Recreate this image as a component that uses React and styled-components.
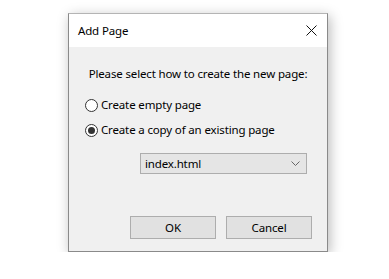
import React, { useState } from 'react';
import styled, { createGlobalStyle } from 'styled-components';

const GlobalStyle = createGlobalStyle`
    html, body {
        margin: 0;
        background: #ffffff;
        font-family: "Noto Sans", "Liberation Sans", sans-serif;
        font-size: 11.5px;
        letter-spacing: -0.15px;
        color: #000;
    }
`;

const Page = styled.div`
    padding: 13px 0 0 68px;
`;

const Dialog = styled.div`
    width: 260px;
    box-sizing: border-box;
    border: 1px solid #8a8a8a;
    border-top-color: #b4b4b4;
    background: #f0f0f0;
    box-shadow: 2px 3px 12px rgba(0, 0, 0, 0.28);
`;

const TitleBar = styled.div`
    display: flex;
    align-items: center;
    justify-content: space-between;
    height: 33px;
    padding-left: 9px;
    background: #ffffff;
`;

const Title = styled.span`
    line-height: 16px;
`;

const CloseBtn = styled.button`
    display: flex;
    align-items: center;
    justify-content: center;
    width: 32px;
    height: 33px;
    padding: 0;
    border: none;
    background: inherit;
`;

const Body = styled.div`
    display: flex;
    flex-direction: column;
    padding: 19px 15px 12px 15px;
`;

const Prompt = styled.p`
    margin: 0 0 15px 0;
    text-align: center;
    white-space: nowrap;
    line-height: 16px;
`;

const Options = styled.div`
    display: flex;
    flex-direction: column;
    gap: 9px;
    padding-left: 1px;
`;

const Option = styled.label`
    display: flex;
    align-items: center;
    height: 16px;
    line-height: 16px;
    white-space: nowrap;
`;

const Dot = styled.span`
    display: flex;
    align-items: center;
    justify-content: center;
    box-sizing: border-box;
    width: 13px;
    height: 13px;
    margin-right: 3px;
    border: 1px solid #333;
    border-radius: 50%;
    background: #fff;
    &::after {
        content: '';
        width: 7px;
        height: 7px;
        border-radius: 50%;
        background: ${({ on }) => (on ? '#333' : 'transparent')};
    }
`;

const Combo = styled.div`
    display: flex;
    align-items: center;
    justify-content: space-between;
    box-sizing: border-box;
    width: 167px;
    height: 21px;
    margin: 15px 0 0 56px;
    padding: 0 6px 0 4px;
    border: 1px solid #adadad;
    background: #e5e5e5;
    line-height: 16px;
`;

const Buttons = styled.div`
    display: flex;
    justify-content: flex-end;
    gap: 10px;
    margin-top: 42px;
`;

const Button = styled.button`
    width: 86px;
    height: 23px;
    padding: 0;
    border: 1px solid #adadad;
    background: #e1e1e1;
    font-family: inherit;
    font-size: inherit;
    letter-spacing: inherit;
    color: #000;
`;

const App = () => {
    const [mode, setMode] = useState('copy');

    return (
        <Page>
            <GlobalStyle />
            <Dialog>
                <TitleBar>
                    <Title>Add Page</Title>
                    <CloseBtn type="button">
                        <svg width="11" height="11" viewBox="0 0 11 11">
                            <path d="M0.5 0.5 L10.5 10.5 M10.5 0.5 L0.5 10.5" stroke="#111" strokeWidth="1" />
                        </svg>
                    </CloseBtn>
                </TitleBar>
                <Body>
                    <Prompt>Please select how to create the new page:</Prompt>
                    <Options>
                        <Option onClick={() => setMode('empty')}>
                            <Dot on={mode === 'empty'} />
                            Create empty page
                        </Option>
                        <Option onClick={() => setMode('copy')}>
                            <Dot on={mode === 'copy'} />
                            Create a copy of an existing page
                        </Option>
                    </Options>
                    <Combo>
                        <span>index.html</span>
                        <svg width="9" height="5" viewBox="0 0 9 5">
                            <path d="M0.5 0.5 L4.5 4.5 L8.5 0.5" stroke="#666" strokeWidth="1" fill="none" />
                        </svg>
                    </Combo>
                    <Buttons>
                        <Button type="button">OK</Button>
                        <Button type="button">Cancel</Button>
                    </Buttons>
                </Body>
            </Dialog>
        </Page>
    );
};

export default App;
